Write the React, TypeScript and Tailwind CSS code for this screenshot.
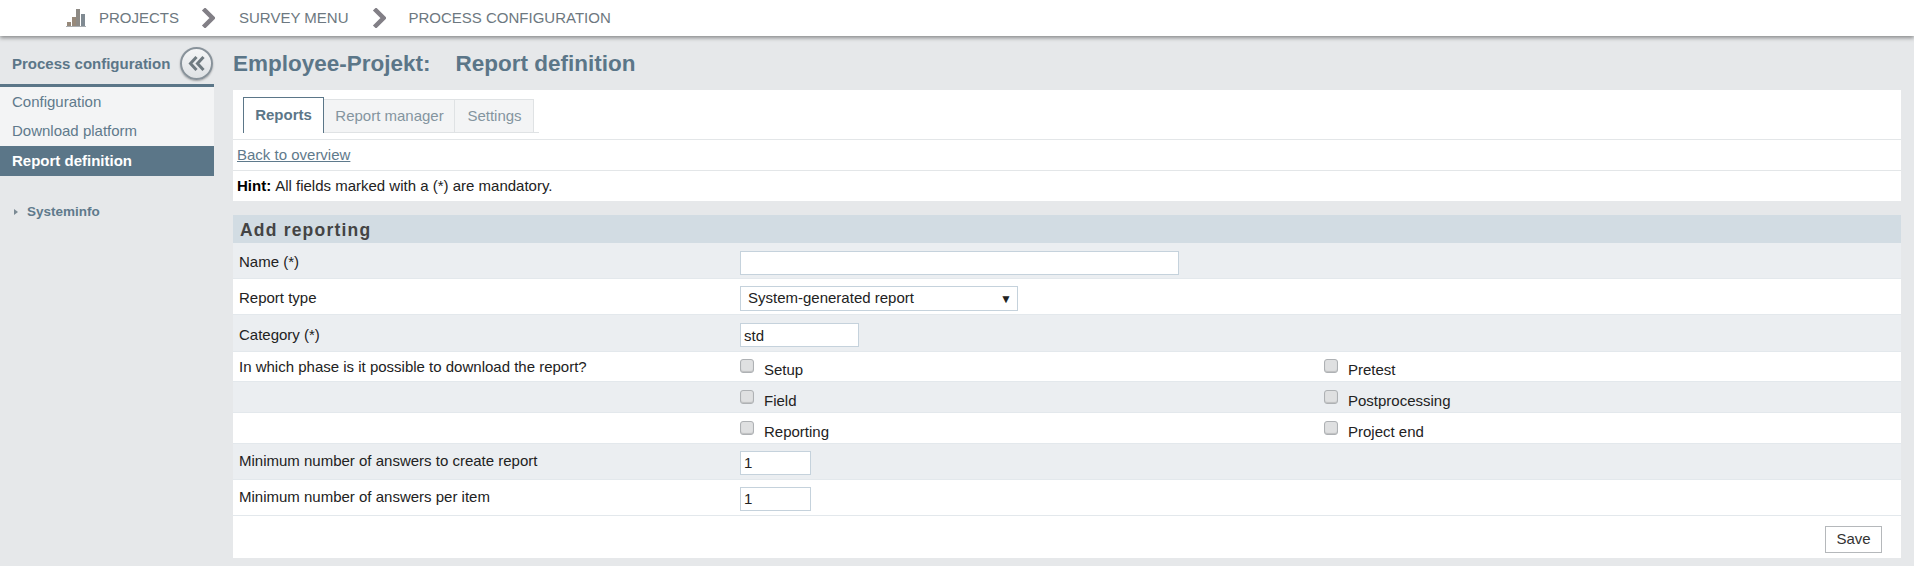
import { ReactNode } from "react";

const font = "font-['Liberation_Sans',Arial,sans-serif]";

function Chevron() {
  return (
    <svg width="14" height="20" viewBox="0 0 14 20" className="shrink-0">
      <path d="M2.5 1 L11.5 10 L2.5 19" fill="none" stroke="#827f86" strokeWidth="4.5" />
    </svg>
  );
}

function BarsIcon() {
  return (
    <svg width="20" height="18" viewBox="0 0 20 18" className="shrink-0">
      <rect x="1" y="13" width="4" height="4" fill="#97897a" />
      <rect x="6" y="8" width="4" height="9" fill="#97897a" />
      <rect x="10" y="0" width="4" height="17" fill="#8d8a85" />
      <rect x="15" y="5" width="4" height="12" fill="#808a92" />
      <rect x="0" y="17" width="20" height="1" fill="#a9adb0" />
    </svg>
  );
}

function CollapseButton() {
  return (
    <div className="flex h-[33px] w-[33px] items-center justify-center rounded-full border-2 border-[#88929a] bg-gradient-to-b from-[#f4f5f6] to-[#dfe2e5] shadow-[0_1px_2px_rgba(0,0,0,0.3)]">
      <svg width="17" height="15" viewBox="0 0 17 15">
        <path d="M8.5 1 L2.5 7.5 L8.5 14 M15.5 1 L9.5 7.5 L15.5 14" fill="none" stroke="#6f7a80" strokeWidth="3" />
      </svg>
    </div>
  );
}

type RowProps = {
  alt?: boolean;
  label?: string;
  h: string;
  labelPad?: string;
  ctrlPad?: string;
  children?: ReactNode;
  right?: ReactNode;
};

function Row({ alt, label, h, labelPad = "", ctrlPad = "", children, right }: RowProps) {
  return (
    <div className={`grid grid-cols-[501px_584px_1fr] items-center border-b border-[#e3e8ec] pl-[6px] ${h} ${alt ? "bg-[#ebeef1]" : "bg-white"}`}>
      <div className={`text-[15px] text-[#222] ${labelPad}`}>{label}</div>
      <div className={ctrlPad}>{children}</div>
      <div className={ctrlPad}>{right}</div>
    </div>
  );
}

function Check({ label }: { label: string }) {
  return (
    <div className="flex items-start">
      <span className="h-[14px] w-[14px] shrink-0 rounded-[3px] border border-[#aeb1b4] bg-[#dfe0e1] shadow-[inset_0_-1px_1px_rgba(0,0,0,0.15)]" />
      <span className="ml-[10px] pt-[2px] text-[15px] leading-[17px] text-[#222]">{label}</span>
    </div>
  );
}

function TextBox({ w, value }: { w: string; value?: string }) {
  return (
    <input
      readOnly
      value={value ?? ""}
      className={`block h-[24px] border border-[#c5d2dc] bg-white px-[3px] text-[15px] text-[#222] outline-none ${w}`}
    />
  );
}

export default function App() {
  return (
    <div className={`${font} flex h-[566px] w-[1914px] flex-col overflow-hidden bg-[#e6e8ea]`}>
      {/* top breadcrumb */}
      <div className="relative z-10 flex h-[36px] shrink-0 items-center bg-white pl-[66px] text-[15px] text-[#6d7880] shadow-[0_2px_4px_rgba(0,0,0,0.4)]">
        <BarsIcon />
        <span className="ml-[13px]">PROJECTS</span>
        <span className="ml-[22px]"><Chevron /></span>
        <span className="ml-[24px]">SURVEY MENU</span>
        <span className="ml-[23px]"><Chevron /></span>
        <span className="ml-[23px]">PROCESS CONFIGURATION</span>
      </div>

      <div className="flex flex-1">
        {/* sidebar */}
        <div className="w-[214px] shrink-0">
          <div className="flex h-[51px] items-start justify-between border-b-[3px] border-[#5b7688] pl-[12px] pr-px pt-[11px]">
            <span className="mt-[6px] text-[15px] font-bold text-[#5b7688]">Process configuration</span>
            <CollapseButton />
          </div>
          <div className="bg-[#f3f4f5] text-[15px] text-[#5f7a8c]">
            <div className="flex h-[29px] items-center pl-[12px] pt-[2px]">Configuration</div>
            <div className="flex h-[30px] items-center pl-[12px]">Download platform</div>
            <div className="flex h-[30px] items-center bg-[#5b7688] pl-[12px] font-bold text-white">Report definition</div>
          </div>
          <div className="mt-[26px] flex items-center pl-[14px] text-[13.5px] font-bold text-[#5f7a8c]">
            <span className="h-0 w-0 border-y-[3px] border-l-[4px] border-y-transparent border-l-[#7b8a94]" />
            <span className="ml-[9px]">Systeminfo</span>
          </div>
        </div>

        {/* main */}
        <div className="ml-[19px] w-[1668px]">
          <h1 className="flex h-[54px] items-center pt-[2px] text-[22.5px] font-bold text-[#5b7688]">
            <span>Employee-Projekt:</span>
            <span className="ml-[25px]">Report definition</span>
          </h1>

          <div className="bg-white">
            <div className="flex h-[50px] items-end border-b border-[#e3e6e8] pl-[10px]">
              <div className="mb-[6px] flex h-[36px] w-[296px] border-b border-[#dfe2e4] text-[15px]">
                <div className="-mb-px flex w-[81px] items-center justify-center border border-b-0 border-[#5b7688] bg-white font-bold text-[#5b7688]">Reports</div>
                <div className="flex h-[33px] w-[131px] items-center justify-center self-end border-r border-t border-[#dfe2e4] bg-[#f3f4f5] pl-px text-[#84949f]">Report manager</div>
                <div className="flex h-[33px] w-[79px] items-center justify-center self-end border-r border-t border-[#dfe2e4] bg-[#f3f4f5] pl-px text-[#84949f]">Settings</div>
              </div>
            </div>
            <div className="flex h-[31px] items-center border-b border-[#e3e6e8] pl-[4px] text-[15px] text-[#5f7a8c] underline">Back to overview</div>
            <div className="flex h-[30px] items-center pl-[4px] text-[15px] text-[#222]">
              <b className="mr-1 text-black">Hint:</b> All fields marked with a (*) are mandatory.
            </div>
          </div>

          <div className="mt-[14px] flex h-[28px] items-center bg-[#d2dce3] pl-[7px] pt-[2px] text-[17.5px] font-bold tracking-[1.2px] text-[#444]">Add reporting</div>

          <Row alt label="Name (*)" h="h-[36px]" labelPad="pt-[4px]" ctrlPad="pt-[4px]"><TextBox w="w-[439px]" /></Row>
          <Row label="Report type" h="h-[36px]" labelPad="pt-[4px]" ctrlPad="pt-[4px]">
            <div className="flex h-[25px] w-[278px] items-center justify-between border border-[#c5d2dc] bg-white pl-[7px] pr-[5px] text-[15px] text-[#222]">
              <span>System-generated report</span>
              <span className="text-[12px]">▼</span>
            </div>
          </Row>
          <Row alt label="Category (*)" h="h-[37px]" labelPad="pt-[4px]" ctrlPad="pt-[4px]"><TextBox w="w-[119px]" value="std" /></Row>
          <Row label="In which phase is it possible to download the report?" h="h-[30px]" labelPad="pt-[2px]" ctrlPad="pt-[4px]" right={<Check label="Pretest" />}><Check label="Setup" /></Row>
          <Row alt h="h-[31px]" ctrlPad="pt-[4px]" right={<Check label="Postprocessing" />}><Check label="Field" /></Row>
          <Row h="h-[31px]" ctrlPad="pt-[4px]" right={<Check label="Project end" />}><Check label="Reporting" /></Row>
          <Row alt label="Minimum number of answers to create report" h="h-[36px]" ctrlPad="pt-[2px]"><TextBox w="w-[71px]" value="1" /></Row>
          <Row label="Minimum number of answers per item" h="h-[36px]" ctrlPad="pt-[2px]"><TextBox w="w-[71px]" value="1" /></Row>
          <div className="flex h-[42px] items-center justify-end bg-white pr-[19px] pt-[5px]">
            <button className="h-[27px] w-[57px] border border-[#b5b8bb] bg-white text-[15px] text-[#333]">Save</button>
          </div>
        </div>
      </div>
    </div>
  );
}
